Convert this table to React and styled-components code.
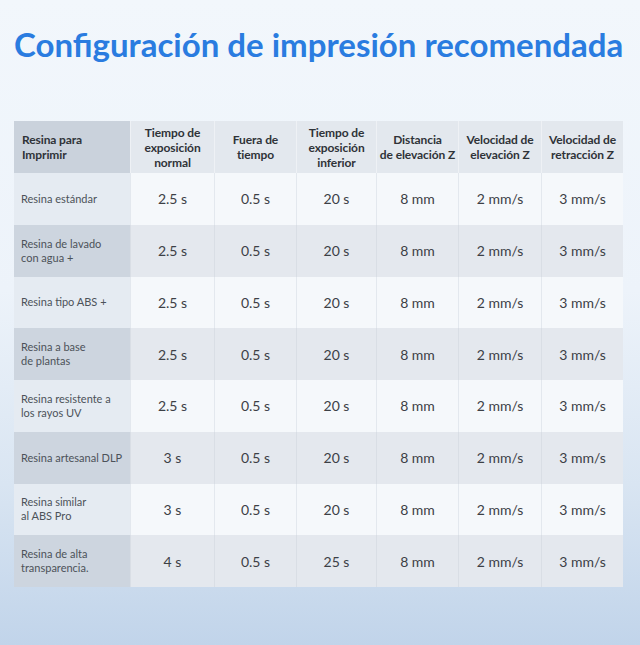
import React from "react";
import styled, { createGlobalStyle } from "styled-components";

const GlobalStyle = createGlobalStyle`
  html, body {
    margin: 0;
    padding: 0;
  }
  body {
    width: 640px;
    height: 645px;
    overflow: hidden;
    font-family: "Lato", "Noto Sans", sans-serif;
    background: linear-gradient(180deg, #f2f7fc 0%, #edf3fa 45%, #d9e5f2 75%, #c1d4ea 100%);
  }
`;

const Page = styled.div`
  height: 645px;
  display: flex;
  flex-direction: column;
  align-items: stretch;
  padding: 22px 17px 0 14px;
  box-sizing: border-box;
`;

const Title = styled.h1`
  margin: 0;
  font-size: 33px;
  font-weight: 700;
  color: #2a7ce0;
  text-align: center;
  letter-spacing: 0;
  line-height: 44px;
  white-space: nowrap;
`;

const Table = styled.div`
  margin-top: 55px;
  width: 609px;
  display: grid;
  grid-template-columns: 116px 84px 82px 80px 82px 83px 82px;
  grid-template-rows: 52px;
  grid-auto-rows: 51.75px;
`;

const HeadCell = styled.div`
  display: flex;
  align-items: center;
  justify-content: ${({ $first }) => ($first ? "flex-start" : "center")};
  text-align: ${({ $first }) => ($first ? "left" : "center")};
  padding: ${({ $first }) => ($first ? "0 8px" : "0")};
  background: ${({ $first }) => ($first ? "#cad2dc" : "#e3e8ee")};
  border-left: ${({ $first }) => ($first ? "none" : "1px solid #eef1f5")};
  font-size: 12px;
  font-weight: 700;
  line-height: 15px;
  color: #2f3338;
  white-space: nowrap;
  letter-spacing: -0.1px;
`;

const NameCell = styled.div`
  display: flex;
  align-items: center;
  padding: 0 7px;
  background: ${({ $alt }) => ($alt ? "#cdd5df" : "#e5ebf2")};
  font-size: 11px;
  line-height: 14px;
  color: #4c5259;
`;

const ValueCell = styled.div`
  display: flex;
  align-items: center;
  justify-content: center;
  background: ${({ $alt }) => ($alt ? "#e4e8ee" : "#f5f8fb")};
  border-left: 1px solid ${({ $alt }) => ($alt ? "#d9dee5" : "#e3e8ee")};
  font-size: 14px;
  color: #3c4046;
`;

const headers = [
  ["Resina para", "Imprimir"],
  ["Tiempo de", "exposición", "normal"],
  ["Fuera de", "tiempo"],
  ["Tiempo de", "exposición", "inferior"],
  ["Distancia", "de elevación Z"],
  ["Velocidad de", "elevación Z"],
  ["Velocidad de", "retracción Z"],
];

const rows = [
  [["Resina estándar"], "2.5 s", "0.5 s", "20 s"],
  [["Resina de lavado", "con agua +"], "2.5 s", "0.5 s", "20 s"],
  [["Resina tipo ABS +"], "2.5 s", "0.5 s", "20 s"],
  [["Resina a base", "de plantas"], "2.5 s", "0.5 s", "20 s"],
  [["Resina resistente a", "los rayos UV"], "2.5 s", "0.5 s", "20 s"],
  [["Resina artesanal DLP"], "3 s", "0.5 s", "20 s"],
  [["Resina similar", "al ABS Pro"], "3 s", "0.5 s", "20 s"],
  [["Resina de alta", "transparencia."], "4 s", "0.5 s", "25 s"],
];

const lines = (parts) =>
  parts.map((p, i) => (
    <React.Fragment key={i}>
      {i > 0 && <br />}
      {p}
    </React.Fragment>
  ));

export default function App() {
  return (
    <>
      <GlobalStyle />
      <Page>
        <Title>Configuración de impresión recomendada</Title>
        <Table>
          {headers.map((h, i) => (
            <HeadCell key={i} $first={i === 0}>
              <span>{lines(h)}</span>
            </HeadCell>
          ))}
          {rows.map(([name, normal, off, bottom], r) => {
            const alt = r % 2 === 1;
            return (
              <React.Fragment key={r}>
                <NameCell $alt={alt}>
                  <span>{lines(name)}</span>
                </NameCell>
                {[normal, off, bottom, "8 mm", "2 mm/s", "3 mm/s"].map((v, c) => (
                  <ValueCell key={c} $alt={alt}>
                    {v}
                  </ValueCell>
                ))}
              </React.Fragment>
            );
          })}
        </Table>
      </Page>
    </>
  );
}
